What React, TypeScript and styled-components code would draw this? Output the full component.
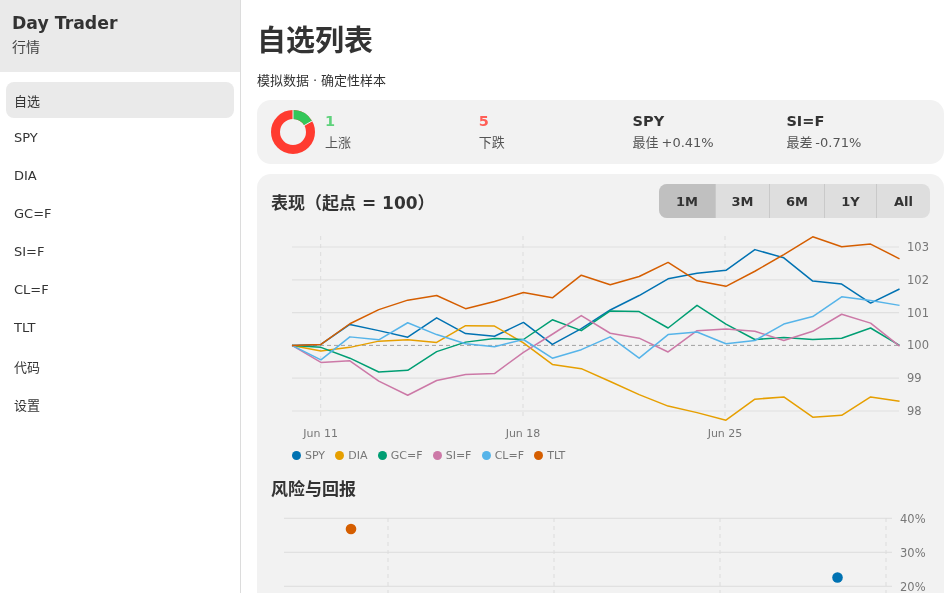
import React from 'react';
import styled, { createGlobalStyle } from 'styled-components';

const Global = createGlobalStyle`
  html, body {
    margin: 0;
    height: 100%;
    overflow: hidden;
    background: #fff;
  }
  body {
    font-family: "DejaVu Sans", "Noto Sans CJK SC", sans-serif;
    color: #333;
  }
`;

const Page = styled.div`
  display: flex;
  width: 944px;
  height: 593px;
  overflow: hidden;
  will-change: transform;
`;

const Sidebar = styled.aside`
  width: 240px;
  flex-shrink: 0;
  border-right: 1px solid #dcdcdc;
`;

const SideHeader = styled.div`
  height: 72px;
  box-sizing: border-box;
  padding: 12px 12px 0;
  background: #eaeaea;
`;

const AppName = styled.div`
  font-size: 17.3px;
  font-weight: 700;
  line-height: 23px;
  color: #333;
`;

const AppSub = styled.div`
  font-size: 14px;
  line-height: 20px;
  margin-top: 2px;
  color: #444;
`;

const Nav = styled.nav`
  display: flex;
  flex-direction: column;
  gap: 2px;
  padding: 10px 6px;
`;

const NavItem = styled.div<{ $active?: boolean; $latin?: boolean }>`
  height: 36px;
  box-sizing: border-box;
  display: flex;
  align-items: center;
  padding: 0 8px ${(p) => (p.$latin ? '2px' : '0')};
  border-radius: 8px;
  font-size: 13px;
  color: #333;
  background: ${(p) => (p.$active ? '#eaeaea' : 'transparent')};
`;

const Main = styled.main`
  flex: 1;
  min-width: 0;
  padding: 0 0 0 16px;
`;

const Title = styled.h1`
  margin: 0;
  padding-top: 21px;
  font-size: 29px;
  line-height: 41px;
  font-weight: 700;
  color: #333;
`;

const Subtitle = styled.p`
  margin: 9px 0 0;
  font-size: 13px;
  line-height: 20px;
  word-spacing: -0.2px;
  color: #333;
`;

const SummaryCard = styled.section`
  display: flex;
  align-items: center;
  height: 64px;
  margin-top: 9px;
  padding: 0 14px;
  box-sizing: border-box;
  gap: 10px;
  border-radius: 14px;
  background: #f2f2f2;
`;

const DonutSvg = styled.svg`
  flex-shrink: 0;
  display: block;
`;

const Stats = styled.div`
  flex: 1;
  display: grid;
  grid-template-columns: repeat(4, 153.8px);
`;

const StatValue = styled.div<{ $color?: string }>`
  font-size: 14.5px;
  font-weight: 700;
  line-height: 18px;
  color: ${(p) => p.$color || '#333'};
`;

const StatLabel = styled.div`
  font-size: 13px;
  line-height: 18px;
  margin-top: 4px;
  word-spacing: -1.2px;
  color: #555;
`;

const ChartCard = styled.section`
  margin-top: 10px;
  padding: 10px 14px 0;
  border-radius: 14px;
  background: #f2f2f2;
  height: 440px;
`;

const ChartHeader = styled.div`
  display: flex;
  align-items: center;
  justify-content: space-between;
`;

const Heading = styled.h2`
  margin: 0;
  font-size: 17px;
  line-height: 24px;
  font-weight: 700;
  color: #333;
`;

const PerfHeading = styled(Heading)`
  padding-top: 4px;
`;

const Segments = styled.div`
  display: flex;
  height: 34px;
  border-radius: 8px;
  overflow: hidden;
  background: #dedede;
`;

const Segment = styled.div<{ $active?: boolean; $w: number }>`
  width: ${(p) => p.$w}px;
  box-sizing: border-box;
  display: flex;
  align-items: center;
  justify-content: center;
  font-size: 13px;
  font-weight: 700;
  color: #333;
  background: ${(p) => (p.$active ? '#c0c0c0' : 'transparent')};
  & + & {
    border-left: 1px solid #c9c9c9;
  }
`;

const ChartSvg = styled.svg`
  display: block;
  margin-top: 8px;
  overflow: visible;
  text {
    font-family: "DejaVu Sans", sans-serif;
    font-size: 11.5px;
    fill: #777;
  }
  text.date {
    font-size: 11px;
  }
`;

const Legend = styled.div`
  display: flex;
  align-items: center;
  gap: 10.2px;
  padding-left: 21px;
  height: 20px;
`;

const LegendItem = styled.span`
  display: flex;
  align-items: center;
  gap: 4px;
  font-size: 11px;
  color: #777;
`;

const Dot = styled.span<{ $color: string }>`
  width: 9px;
  height: 9px;
  border-radius: 50%;
  background: ${(p) => p.$color};
`;

const RiskHeading = styled(Heading)`
  margin-top: 12px;
`;

const RiskSvg = styled(ChartSvg)`
  margin-top: 9px;
`;

const series = [
  { name: 'SPY', color: '#0072b2', v: [100, 100.03, 100.64, 100.45, 100.25, 100.84, 100.36, 100.28, 100.7, 100.03, 100.51, 101.08, 101.52, 102.03, 102.2, 102.29, 102.92, 102.67, 101.96, 101.87, 101.29, 101.72] },
  { name: 'DIA', color: '#e69f00', v: [100, 99.83, 99.94, 100.13, 100.17, 100.09, 100.6, 100.59, 100.08, 99.42, 99.29, 98.9, 98.5, 98.15, 97.95, 97.72, 98.36, 98.43, 97.81, 97.87, 98.43, 98.3] },
  { name: 'GC=F', color: '#009e73', v: [100, 99.94, 99.61, 99.19, 99.24, 99.81, 100.1, 100.21, 100.18, 100.78, 100.45, 101.05, 101.03, 100.53, 101.22, 100.65, 100.18, 100.24, 100.18, 100.22, 100.53, 100] },
  { name: 'SI=F', color: '#cc79a7', v: [100, 99.48, 99.53, 98.91, 98.48, 98.93, 99.11, 99.14, 99.79, 100.34, 100.91, 100.37, 100.22, 99.8, 100.45, 100.5, 100.43, 100.15, 100.43, 100.95, 100.68, 99.98] },
  { name: 'CL=F', color: '#56b4e9', v: [100, 99.56, 100.26, 100.17, 100.69, 100.33, 100.05, 99.96, 100.18, 99.61, 99.87, 100.26, 99.61, 100.33, 100.41, 100.05, 100.15, 100.65, 100.88, 101.48, 101.37, 101.22] },
  { name: 'TLT', color: '#d55e00', v: [100, 100.03, 100.66, 101.09, 101.38, 101.52, 101.12, 101.34, 101.61, 101.45, 102.14, 101.85, 102.1, 102.53, 101.97, 101.8, 102.26, 102.77, 103.31, 103.01, 103.09, 102.64] },
];

const navItems = ['SPY', 'DIA', 'GC=F', 'SI=F', 'CL=F', 'TLT'];
const ranges = [
  { label: '1M', w: 56 },
  { label: '3M', w: 54 },
  { label: '6M', w: 55 },
  { label: '1Y', w: 52 },
  { label: 'All', w: 54 },
];

// svg origin sits at page x=271, y=226
const px = (i: number) => 21 + i * 28.93;
const py = (v: number) => 119.4 - (v - 100) * 32.8;

const Donut = () => (
  <DonutSvg width="44" height="44" viewBox="0 0 44 44">
    <circle cx="22" cy="22" r="17.5" fill="none" stroke="#ff3b30" strokeWidth="9" />
    <path d="M22 4.5 A17.5 17.5 0 0 1 37.16 13.25" fill="none" stroke="#34c759" strokeWidth="9" />
    <path d="M22 0 V13 M41.05 11 L29.8 17.5" stroke="#f2f2f2" strokeWidth="1" />
  </DonutSvg>
);

const LineChart = () => (
  <ChartSvg width="659" height="219" viewBox="0 0 659 219">
    {[103, 102, 101, 99, 98].map((t) => (
      <line key={t} x1="21" x2="628" y1={py(t)} y2={py(t)} stroke="#e0e0e0" strokeWidth="1.2" />
    ))}
    {[49.7, 252, 454].map((x) => (
      <line key={x} x1={x} x2={x} y1="10" y2="191" stroke="#dcdcdc" strokeDasharray="4 4" />
    ))}
    <line x1="21" x2="628" y1={py(100)} y2={py(100)} stroke="#a0a0a0" strokeDasharray="4 3" />
    {series.map((s) => (
      <polyline
        key={s.name}
        fill="none"
        stroke={s.color}
        strokeWidth="1.5"
        strokeLinejoin="round"
        points={s.v.map((v, i) => `${px(i)},${py(v)}`).join(' ')}
      />
    ))}
    {[103, 102, 101, 100, 99, 98].map((t) => (
      <text key={t} x="636" y={py(t) + 4}>{t}</text>
    ))}
    {[
      { x: 49.7, t: 'Jun 11' },
      { x: 252, t: 'Jun 18' },
      { x: 454, t: 'Jun 25' },
    ].map((d) => (
      <text key={d.t} className="date" x={d.x} y="211" textAnchor="middle">{d.t}</text>
    ))}
  </ChartSvg>
);

const RiskChart = () => (
  <RiskSvg width="659" height="90" viewBox="0 0 659 90">
    {[8.3, 42.3, 76.3].map((y) => (
      <line key={y} x1="13" x2="621" y1={y} y2={y} stroke="#dcdcdc" />
    ))}
    {[117, 283, 449, 615].map((x) => (
      <line key={x} x1={x} x2={x} y1="8" y2="90" stroke="#dcdcdc" strokeDasharray="4 4" />
    ))}
    <text x="629" y="12.5">40%</text>
    <text x="629" y="46.5">30%</text>
    <text x="629" y="80.5">20%</text>
    <circle cx="80" cy="19" r="5.3" fill="#d55e00" />
    <circle cx="566.5" cy="67.5" r="5.3" fill="#0072b2" />
  </RiskSvg>
);

export default function App() {
  return (
    <Page>
      <Global />
      <Sidebar>
        <SideHeader>
          <AppName>Day Trader</AppName>
          <AppSub>行情</AppSub>
        </SideHeader>
        <Nav>
          <NavItem $active>自选</NavItem>
          {navItems.map((n) => (
            <NavItem key={n} $latin>{n}</NavItem>
          ))}
          <NavItem>代码</NavItem>
          <NavItem>设置</NavItem>
        </Nav>
      </Sidebar>
      <Main>
        <Title>自选列表</Title>
        <Subtitle>模拟数据 · 确定性样本</Subtitle>
        <SummaryCard>
          <Donut />
          <Stats>
            <div>
              <StatValue $color="#5fd27c">1</StatValue>
              <StatLabel>上涨</StatLabel>
            </div>
            <div>
              <StatValue $color="#ff5f57">5</StatValue>
              <StatLabel>下跌</StatLabel>
            </div>
            <div>
              <StatValue>SPY</StatValue>
              <StatLabel>最佳 +0.41%</StatLabel>
            </div>
            <div>
              <StatValue>SI=F</StatValue>
              <StatLabel>最差 -0.71%</StatLabel>
            </div>
          </Stats>
        </SummaryCard>
        <ChartCard>
          <ChartHeader>
            <PerfHeading>表现（起点 = 100）</PerfHeading>
            <Segments>
              {ranges.map((r, i) => (
                <Segment key={r.label} $w={r.w} $active={i === 0}>{r.label}</Segment>
              ))}
            </Segments>
          </ChartHeader>
          <LineChart />
          <Legend>
            {series.map((s) => (
              <LegendItem key={s.name}>
                <Dot $color={s.color} />
                {s.name}
              </LegendItem>
            ))}
          </Legend>
          <RiskHeading>风险与回报</RiskHeading>
          <RiskChart />
        </ChartCard>
      </Main>
    </Page>
  );
}
